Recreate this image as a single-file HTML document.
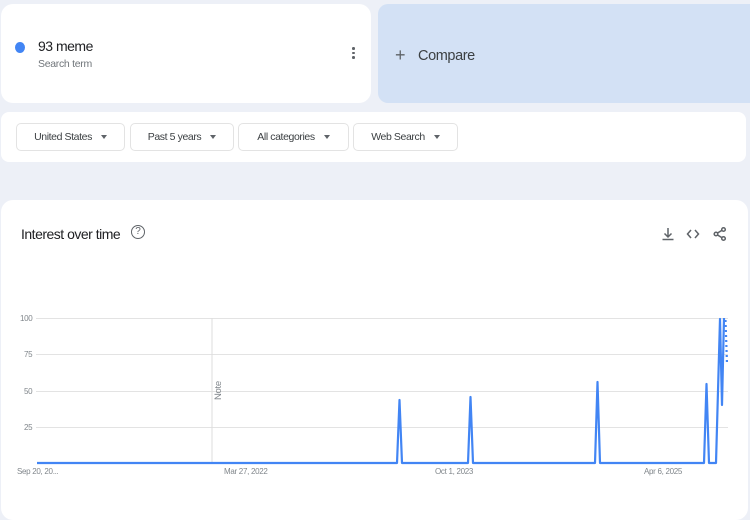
<!DOCTYPE html>
<html><head><meta charset="utf-8"><style>
body{margin:0;width:750px;height:500px;background:#edf0f7;font-family:"Liberation Sans",sans-serif;position:relative;overflow:hidden}
.card{position:absolute;background:#fff;border-radius:12px}
.chip{position:absolute;top:123px;height:26px;border:1px solid #e3e3e3;border-radius:5px;background:#fff;font-size:10.5px;color:#3c4043;display:flex;align-items:center;justify-content:center;letter-spacing:-0.4px}
.chip:after{content:"";border-left:3.5px solid transparent;border-right:3.5px solid transparent;border-top:4.5px solid #5f6368;margin-left:9px}
.t{position:absolute;font-size:8px;color:#80868b;letter-spacing:-0.3px}
</style></head><body>
<div class="card" style="left:1px;top:4px;width:370px;height:99px"></div>
<div style="position:absolute;left:15px;top:42px;width:10px;height:11px;border-radius:50%;background:#4285f4"></div>
<div style="position:absolute;left:38px;top:38px;font-size:14px;color:#202124;letter-spacing:-0.5px">93 meme</div>
<div style="position:absolute;left:38px;top:58px;font-size:10.5px;color:#70757a;letter-spacing:-0.3px">Search term</div>
<div style="position:absolute;left:352px;top:47px;width:3px">
<div style="width:2.5px;height:2.5px;background:#5f6368;border-radius:50%;margin-bottom:2px"></div><div style="width:2.5px;height:2.5px;background:#5f6368;border-radius:50%;margin-bottom:2px"></div><div style="width:2.5px;height:2.5px;background:#5f6368;border-radius:50%"></div></div>
<div style="position:absolute;left:378px;top:4px;width:372px;height:99px;background:#d3e1f5;border-radius:10px 0 0 10px"></div>
<div style="position:absolute;left:395px;top:45px;font-size:18px;color:#5f6368;font-weight:300">+</div>
<div style="position:absolute;left:418px;top:48px;font-size:14.5px;color:#3c4043;letter-spacing:-0.4px">Compare</div>
<div class="card" style="left:1px;top:112px;width:745px;height:50px;border-radius:8px"></div>
<div class="chip" style="left:16px;width:107px">United States</div>
<div class="chip" style="left:130px;width:102px">Past 5 years</div>
<div class="chip" style="left:238px;width:109px">All categories</div>
<div class="chip" style="left:353px;width:103px">Web Search</div>
<div class="card" style="left:1px;top:200px;width:747px;height:320px"></div>
<div style="position:absolute;left:21px;top:226px;font-size:14px;color:#202124;letter-spacing:-0.5px">Interest over time</div>
<div style="position:absolute;left:131px;top:225px;width:12px;height:12px;border:1.3px solid #5f6368;border-radius:50%;font-size:10px;color:#5f6368;text-align:center;line-height:12px">?</div>
<svg style="position:absolute;left:0;top:0" width="750" height="500">
<g stroke="#5f6368" stroke-width="1.5" fill="none">
<path d="M668 228v9M664.5 233.5l3.5 3.5 3.5-3.5M662.5 239.5h11"/>
<path d="M691 230l-3.5 4 3.5 4M695 230l3.5 4-3.5 4"/>
<circle cx="723.5" cy="229.5" r="1.8"/><circle cx="716" cy="234" r="1.8"/><circle cx="723.5" cy="238.5" r="1.8"/><path d="M717.5 233l4.5-2.7M717.5 235l4.5 2.7"/>
</g>
<g stroke="#e3e3e3" stroke-width="1">
<path d="M36 318.5H728M36 354.5H728M36 391.5H728M36 427.5H728"/>
<path d="M212 318v145" stroke="#ddd"/>
</g>
<polyline fill="none" stroke="#4285f4" stroke-width="2.2" stroke-linejoin="round" points="37,463 397,463 399.5,400 402,463 468,463 470.5,397 473,463 595,463 597.5,382 600,463 704,463 706.5,384 709,463 716,463 720,319 722,405 724,318"/>
<path d="M725.5 320 L727 364" stroke="#4285f4" stroke-width="2.2" stroke-dasharray="2 3"/>
</svg>
<div class="t" style="left:20px;top:314px">100</div>
<div class="t" style="left:24px;top:350px">75</div>
<div class="t" style="left:24px;top:387px">50</div>
<div class="t" style="left:24px;top:423px">25</div>
<div class="t" style="left:213px;top:400px;transform:rotate(-90deg);transform-origin:left top;font-size:9.5px">Note</div>
<div class="t" style="left:17px;top:467px">Sep 20, 20...</div>
<div class="t" style="left:224px;top:467px">Mar 27, 2022</div>
<div class="t" style="left:435px;top:467px">Oct 1, 2023</div>
<div class="t" style="left:644px;top:467px">Apr 6, 2025</div>
</body></html>
